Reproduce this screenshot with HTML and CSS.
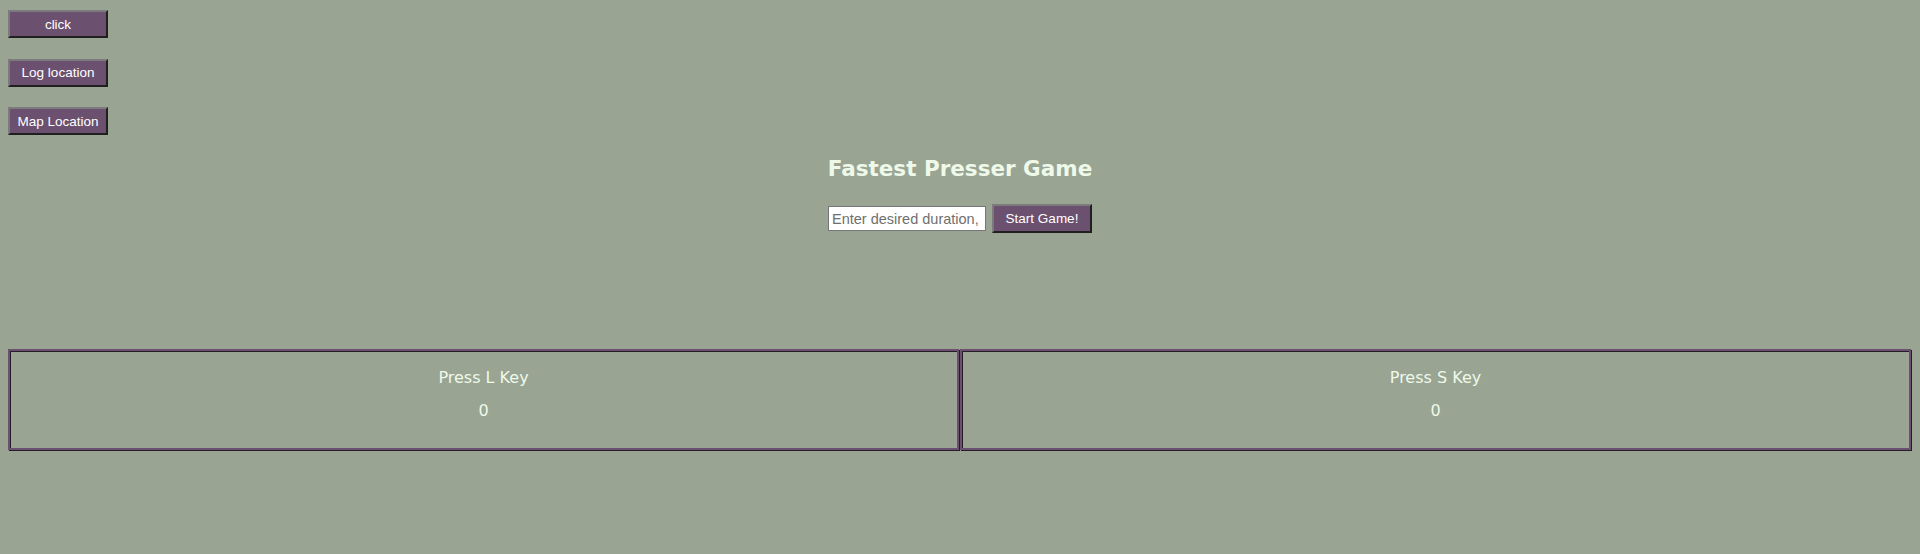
FILE: index.html
```html
<!DOCTYPE html>
<html>
<head>
<meta charset="utf-8">
<title>Fastest Presser Game</title>
<link rel="stylesheet" href="styles.css">
</head>
<body>
<div class="tools">
  <button class="btn">click</button>
  <button class="btn">Log location</button>
  <button class="btn">Map Location</button>
</div>
<div class="game">
  <h1 class="title">Fastest Presser Game</h1>
  <div class="form">
    <input class="duration" type="text" placeholder="Enter desired duration, in seconds">
    <button class="btn">Start Game!</button>
  </div>
</div>
<div class="board">
  <div class="cell">
    <p class="label">Press L Key</p>
    <p class="score">0</p>
  </div>
  <div class="cell">
    <p class="label">Press S Key</p>
    <p class="score">0</p>
  </div>
</div>
</body>
</html>
```

FILE: styles.css
```css
html, body {
  margin: 0;
  padding: 0;
}
body {
  margin: 8px;
  background: #99a592;
  color: #eef9ea;
  font-family: "DejaVu Sans", "Open Sans", sans-serif;
  height: 538px;
}
.tools {
  display: flex;
  flex-direction: column;
  align-items: flex-start;
  gap: 20.5px;
  padding-top: 2px;
}
.btn {
  width: 100px;
  height: 28px;
  padding: 0;
  background: #6c5070;
  color: #ffffff;
  font-family: "Liberation Sans", Arial, sans-serif;
  font-size: 13.5px;
  border: 2px solid;
  border-color: #7c7a7c #1f1f1f #1f1f1f #7c7a7c;
}
.game {
  display: flex;
  flex-direction: column;
  align-items: center;
}
.title {
  margin: 19px 0 0;
  font-size: 21.5px;
  font-weight: bold;
  line-height: 30px;
}
.form {
  display: flex;
  align-items: center;
  gap: 6px;
  margin-top: 20px;
}
.duration {
  box-sizing: border-box;
  width: 158px;
  height: 25px;
  padding: 2px 3px;
  border: 1px solid #767676;
  background: #ffffff;
  font-family: "Liberation Sans", Arial, sans-serif;
  font-size: 14.5px;
  color: #000;
}
.duration::placeholder {
  color: #6f6f6f;
}
.form .btn {
  height: 29px;
}
.board {
  display: grid;
  grid-template-columns: 1fr 1fr;
  gap: 1px;
  margin-top: 116px;
  margin-right: 1px;
}
.cell {
  border: 2px solid #6c5070;
  box-shadow: inset 1px 1px 0 #241c26, 1px 1px 0 #241c26;
  height: 101px;
  box-sizing: border-box;
  display: flex;
  flex-direction: column;
  align-items: center;
}
.label {
  margin: 17px 0 0;
  font-size: 16px;
  line-height: 20px;
}
.score {
  margin: 13px 0 0;
  font-size: 16px;
  line-height: 20px;
}
```
